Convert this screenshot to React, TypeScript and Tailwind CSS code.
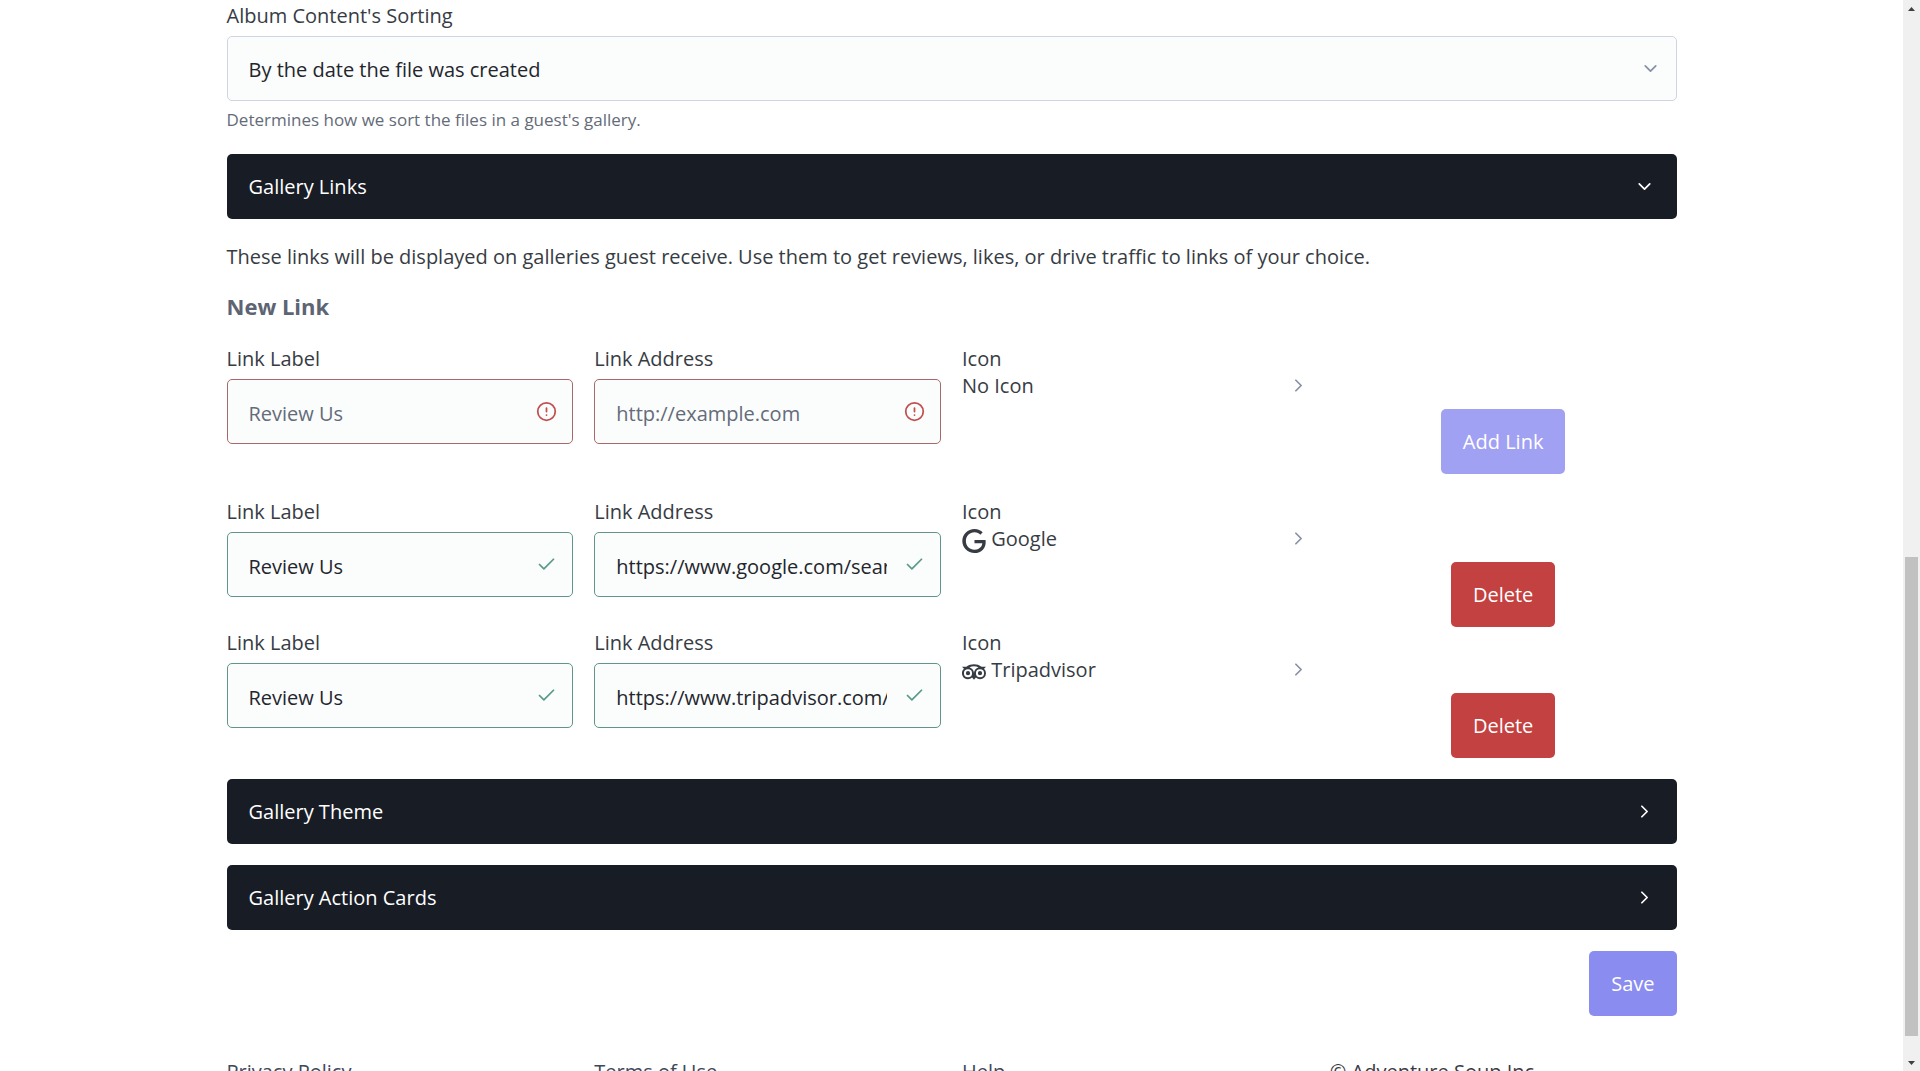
import { useState } from "react";
import type { ReactNode } from "react";
import {
  Check,
  ChevronDown,
  ChevronRight,
  CircleAlert,
} from "lucide-react";
import { SiGoogle, SiTripadvisor } from "react-icons/si";

type FieldProps = {
  id: string;
  label: string;
  type?: string;
  placeholder: string;
  defaultValue?: string;
};

function Field({ id, label, type = "text", placeholder, defaultValue }: FieldProps) {
  const [value, setValue] = useState(defaultValue ?? "");
  const valid = value !== "";

  return (
    <div>
      <label htmlFor={id} className="block mb-[7px] leading-[27px]">
        {label}
      </label>
      <div className="relative">
        <input
          id={id}
          type={type}
          required
          aria-invalid={!valid}
          placeholder={placeholder}
          value={value}
          onChange={(e) => setValue(e.target.value)}
          className={
            valid
              ? "block w-full h-[65px] pt-[3px] pl-[21px] pr-[53px] rounded-[5px] border border-[#5f958b] bg-[#fbfcfc] text-[#23262c] placeholder:text-[#646b79]"
              : "block w-full h-[65px] pt-[3px] pl-[21px] pr-[53px] rounded-[5px] border border-[#a8696b] bg-[#fbfcfc] text-[#23262c] placeholder:text-[#646b79]"
          }
        />
        <span
          aria-hidden="true"
          className="absolute inset-y-0 right-4 flex items-center pointer-events-none"
        >
          {valid ? (
            <Check size={21} className="text-[#5a9a8a]" />
          ) : (
            <CircleAlert size={21} className="text-[#c0504f]" />
          )}
        </span>
      </div>
    </div>
  );
}

function IconPicker({ icon, name }: { icon?: ReactNode; name: string }) {
  return (
    <div className="leading-[27px]">
      <p>Icon</p>
      <button
        type="button"
        aria-label={`Icon: ${name}`}
        className="flex w-full items-start justify-between text-left"
      >
        <span>
          {icon} {name}
        </span>
        <span aria-hidden="true" className="flex h-[27px] items-center">
          <ChevronRight size={21} className="text-[#8891a4]" />
        </span>
      </button>
    </div>
  );
}

type LinkRowProps = {
  id: string;
  label?: string;
  address?: string;
  icon?: ReactNode;
  iconName: string;
  children: ReactNode;
};

function LinkRow({ id, label, address, icon, iconName, children }: LinkRowProps) {
  return (
    <div className="grid grid-cols-4 gap-[21px]">
      <Field
        id={`${id}-label`}
        label="Link Label"
        placeholder="Review Us"
        defaultValue={label}
      />
      <Field
        id={`${id}-address`}
        label="Link Address"
        type="url"
        placeholder="http://example.com"
        defaultValue={address}
      />
      <IconPicker icon={icon} name={iconName} />
      <div className="flex justify-center pt-16">{children}</div>
    </div>
  );
}

function SectionToggle({ title, open = false }: { title: string; open?: boolean }) {
  return (
    <button
      type="button"
      aria-expanded={open}
      className="flex w-full h-[65px] items-center justify-between px-[22px] rounded-[5px] bg-[#181c25] text-white"
    >
      <span>{title}</span>
      <span aria-hidden="true">
        {open ? <ChevronDown size={21} /> : <ChevronRight size={21} />}
      </span>
    </button>
  );
}

function DeleteButton() {
  return (
    <button
      type="button"
      className="h-[65px] px-[22px] rounded-[5px] bg-[#c34140] text-white"
    >
      Delete
    </button>
  );
}

function ScrollRail() {
  return (
    <div aria-hidden="true" className="flex w-[17px] shrink-0 flex-col items-center bg-[#f0f0f0]">
      <svg width="17" height="17" viewBox="0 0 17 17" fill="#404040">
        <path d="M5 11h7L8.500 7z" />
      </svg>
      <div className="flex w-[13px] grow flex-col">
        <div className="grow-[540]" />
        <div className="grow-[479] bg-[#c1c1c1]" />
        <div className="grow-[18]" />
      </div>
      <svg width="17" height="17" viewBox="0 0 17 17" fill="#404040">
        <path d="M5 7h7l-3.500 4z" />
      </svg>
    </div>
  );
}

function App() {
  return (
    <div className="flex h-screen overflow-hidden bg-white font-['Open_Sans','Noto_Sans',sans-serif] text-[20px] leading-8 text-[#373c44]">
      <div className="grow overflow-hidden">
        <main className="mx-auto max-w-[1450px] pt-0.5">
          <form>
            <label htmlFor="sorting" className="block mb-[7px] leading-[27px]">
              Album Content&apos;s Sorting
            </label>
            <div className="relative">
              <select
                id="sorting"
                aria-describedby="sorting-help"
                className="block w-full h-[65px] appearance-none pt-0.5 px-[21px] rounded-[5px] border border-[#cfd5e2] bg-[#fbfcfc] text-[#23262c]"
              >
                <option>By the date the file was created</option>
              </select>
              <span
                aria-hidden="true"
                className="absolute inset-y-0 right-4 flex items-center pointer-events-none"
              >
                <ChevronDown size={21} className="text-[#8891a4]" />
              </span>
            </div>
            <p
              id="sorting-help"
              className="mt-1.5 mb-[21px] text-[17px] leading-[26px] text-[#646b79]"
            >
              Determines how we sort the files in a guest&apos;s gallery.
            </p>

            <SectionToggle title="Gallery Links" open />
            <p className="mt-[22px] mb-[19px]">
              These links will be displayed on galleries guest receive. Use them
              to get reviews, likes, or drive traffic to links of your choice.
            </p>
            <h2 className="mb-[25px] text-[22px] leading-7 font-bold text-[#5d6473]">
              New Link
            </h2>

            <LinkRow id="new" iconName="No Icon">
              <button
                type="button"
                disabled
                className="h-[65px] px-[22px] rounded-[5px] bg-[#a1a1f3] text-white"
              >
                Add Link
              </button>
            </LinkRow>

            <div className="mt-6 mb-[21px] flex flex-col gap-0.5">
              <LinkRow
                id="google"
                label="Review Us"
                address="https://www.google.com/search?q=reviews"
                icon={<SiGoogle size={24} className="inline align-middle" />}
                iconName="Google"
              >
                <DeleteButton />
              </LinkRow>
              <LinkRow
                id="tripadvisor"
                label="Review Us"
                address="https://www.tripadvisor.com/UserReview"
                icon={<SiTripadvisor size={24} className="inline align-middle" />}
                iconName="Tripadvisor"
              >
                <DeleteButton />
              </LinkRow>
            </div>

            <div className="flex flex-col gap-[21px]">
              <SectionToggle title="Gallery Theme" />
              <SectionToggle title="Gallery Action Cards" />
              <button
                type="submit"
                className="h-[65px] self-end px-[22px] rounded-[5px] bg-[#8a8cf0] text-white"
              >
                Save
              </button>
            </div>
          </form>
        </main>

        <footer className="mx-auto mt-10 grid max-w-[1450px] grid-cols-4 gap-[21px]">
          <a href="#privacy" className="text-[#3a4a5c]">Privacy Policy</a>
          <a href="#terms" className="text-[#3a4a5c]">Terms of Use</a>
          <a href="#help" className="text-[#3a4a5c]">Help</a>
          <span>© Adventure Soup Inc.</span>
        </footer>
      </div>
      <ScrollRail />
    </div>
  );
}

export default App;
